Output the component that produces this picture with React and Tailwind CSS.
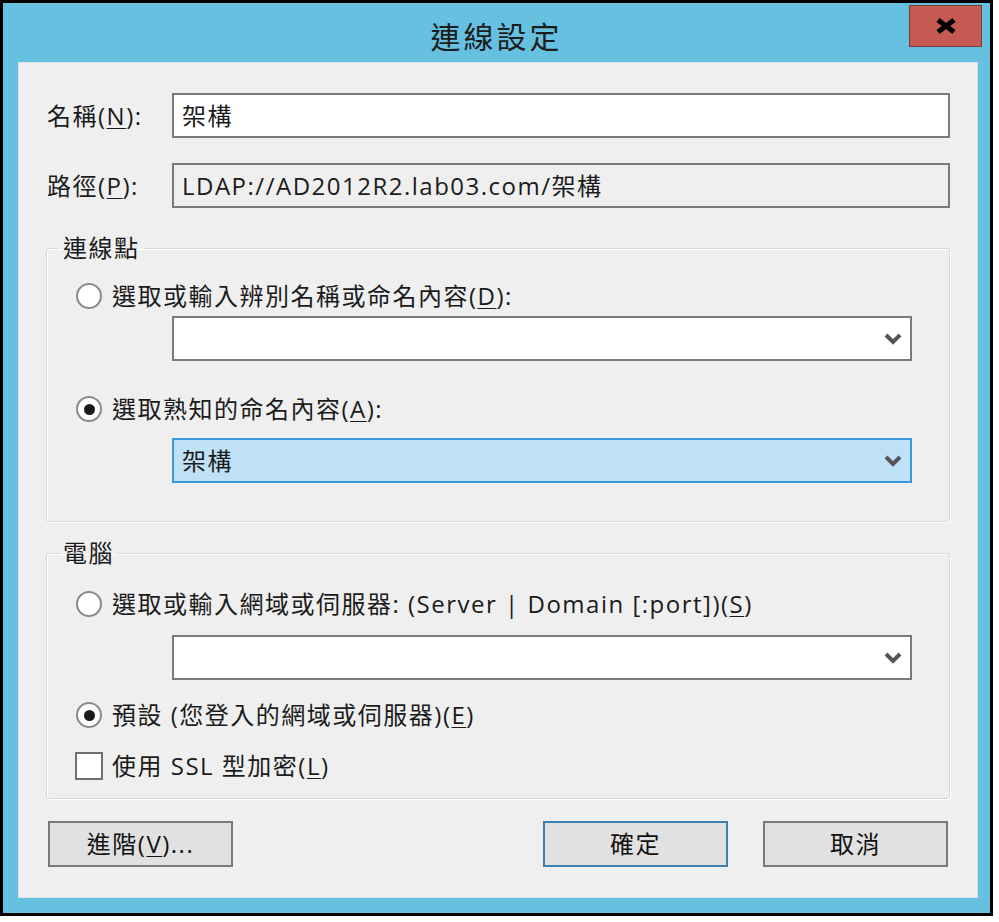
import React from 'react';

const FONT = { fontFamily: '"Open Sans", "Noto Sans CJK TC", sans-serif' };

function Key({ k }) {
  return (
    <>
      (<span className="underline underline-offset-[3px] decoration-1">{k}</span>)
    </>
  );
}

function Chevron() {
  return (
    <svg width="18" height="13" viewBox="0 0 18 13" className="shrink-0">
      <path d="M2 3 L9 10 L16 3" fill="none" stroke="#555" strokeWidth="4" strokeLinejoin="miter" />
    </svg>
  );
}

function Combo({ value, selected }) {
  return (
    <div
      className={
        'ml-[125px] w-[740px] h-[45px] flex items-center justify-between pl-[8px] pr-[8px] border-2 ' +
        (selected ? 'bg-[#bfe1f5] border-[#3a9ad9]' : 'bg-white border-[#7a7a7a]')
      }
    >
      <span>{value}</span>
      <Chevron />
    </div>
  );
}

function Radio({ checked, children }) {
  return (
    <div className="h-[32px] flex items-center pl-[29px] gap-[10px]">
      <span className="w-[26px] h-[26px] rounded-full border-2 border-[#8a8a8a] bg-white flex items-center justify-center shrink-0">
        {checked && <span className="w-[11px] h-[11px] rounded-full bg-[#1a1a1a]" />}
      </span>
      <span className="whitespace-nowrap">{children}</span>
    </div>
  );
}

function Group({ title, children, className }) {
  return (
    <fieldset
      className={
        'border border-[#cfdae1] rounded-[3px] shadow-[inset_1px_1px_0_#ffffff,1px_1px_0_#ffffff] ' + className
      }
    >
      <legend className="ml-[12px] px-[4px] h-[32px] leading-[32px]">{title}</legend>
      {children}
    </fieldset>
  );
}

function Button({ children, primary }) {
  return (
    <button
      className={
        'w-[185px] h-[46px] bg-[#e1e1e1] border-2 text-[24px] tracking-[1.5px] text-[#111] ' +
        (primary ? 'border-[#3c7fb1]' : 'border-[#7a7a7a]')
      }
    >
      {children}
    </button>
  );
}

export default function App() {
  return (
    <div className="w-[999px] h-[922px] bg-white" style={FONT}>
      <div className="w-[993px] h-[916px] border-[3px] border-black bg-[#66c0e0] flex flex-col">
        {/* title bar */}
        <div className="relative h-[59px] shrink-0 flex items-center justify-center">
          <span className="text-[30px] tracking-[3px] text-[#1c1c1c] mt-[8px]">連線設定</span>
          <div className="absolute right-[8px] top-[2px] w-[73px] h-[42px] bg-[#c45a52] border border-[#7c3a35] flex items-center justify-center">
            <svg width="22" height="16" viewBox="0 0 22 16">
              <path d="M3 2 L19 14 M19 2 L3 14" stroke="#000" strokeWidth="5" />
            </svg>
          </div>
        </div>

        {/* content panel */}
        <div className="ml-[15px] mr-[12px] mb-[15px] flex-1 bg-[#efefef] border border-[#d6e3ea] pt-[30px] px-[27px] pb-[29px] flex flex-col text-[24px] tracking-[1.5px] text-[#1b1b1b]">
          <div className="h-[45px] flex items-center">
            <span className="w-[126px] pl-[1px]">
              名稱<Key k="N" />:
            </span>
            <div className="flex-1 h-[45px] bg-white border-2 border-[#7a7a7a] flex items-center pl-[8px]">架構</div>
          </div>
          <div className="mt-[25px] h-[45px] flex items-center">
            <span className="w-[126px] pl-[1px]">
              路徑<Key k="P" />:
            </span>
            <div className="flex-1 h-[45px] bg-[#efefef] border-2 border-[#7a7a7a] flex items-center pl-[8px]">
              LDAP://AD2012R2.lab03.com/架構
            </div>
          </div>

          <Group title="連線點" className="mt-[24px] pb-[38px]">
            <div className="mt-[16px]">
              <Radio>
                選取或輸入辨別名稱或命名內容<Key k="D" />:
              </Radio>
            </div>
            <div className="mt-[4px]">
              <Combo value="" />
            </div>
            <div className="mt-[32px]">
              <Radio checked>
                選取熟知的命名內容<Key k="A" />:
              </Radio>
            </div>
            <div className="mt-[13px]">
              <Combo value="架構" selected />
            </div>
          </Group>

          <Group title="電腦" className="mt-[15px] pb-[16px]">
            <div className="mt-[19px]">
              <Radio>
                選取或輸入網域或伺服器: (Server | Domain [:port])<Key k="S" />
              </Radio>
            </div>
            <div className="mt-[15px]">
              <Combo value="" />
            </div>
            <div className="mt-[19px]">
              <Radio checked>
                預設 (您登入的網域或伺服器)<Key k="E" />
              </Radio>
            </div>
            <div className="mt-[19px] h-[32px] flex items-center pl-[28px] gap-[9px]">
              <span className="w-[28px] h-[28px] border-2 border-[#707070] bg-white shrink-0" />
              <span>
                使用 SSL 型加密<Key k="L" />
              </span>
            </div>
          </Group>

          <div className="mt-[22px] flex items-center pl-[2px] pr-[2px]">
            <Button>
              進階<Key k="V" />...
            </Button>
            <div className="flex-1" />
            <Button primary>確定</Button>
            <div className="w-[35px]" />
            <Button>取消</Button>
          </div>
        </div>
      </div>
    </div>
  );
}
